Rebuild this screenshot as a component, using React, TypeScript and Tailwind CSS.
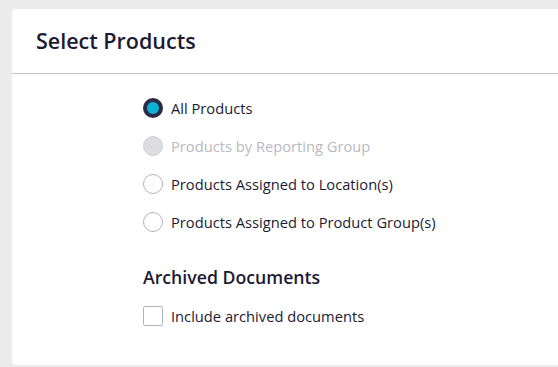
import React from "react";

function Radio({ state }: { state: "checked" | "disabled" | "off" }) {
  if (state === "checked")
    return (
      <span className="w-5 h-5 rounded-full bg-[#2a2947] flex items-center justify-center shrink-0">
        <span className="w-3 h-3 rounded-full bg-[#0cb1d6]" />
      </span>
    );
  if (state === "disabled")
    return <span className="w-5 h-5 rounded-full bg-[#dcdce1] border border-[#cfcfd6] shrink-0" />;
  return <span className="w-5 h-5 rounded-full bg-white border border-[#b3b3bf] shrink-0" />;
}

export default function App() {
  const rows: { label: string; state: "checked" | "disabled" | "off" }[] = [
    { label: "All Products", state: "checked" },
    { label: "Products by Reporting Group", state: "disabled" },
    { label: "Products Assigned to Location(s)", state: "off" },
    { label: "Products Assigned to Product Group(s)", state: "off" },
  ];
  return (
    <div
      className="w-[558px] h-[367px] bg-[#ececec] pl-[12px] pt-[9px] overflow-hidden"
      style={{ fontFamily: '"Open Sans", "Noto Sans", sans-serif' }}
    >
      <div className="bg-white rounded-l-[4px] h-[356px] w-[560px]">
        <div className="h-[65px] border-b border-[#c4c4cc] flex items-center pl-[24px]">
          <h1 className="text-[21.5px] font-semibold text-[#1c1b33]">Select Products</h1>
        </div>
        <div className="pl-[131px] pt-[24px]">
          <div className="flex flex-col gap-[18px]">
            {rows.map((r) => (
              <div key={r.label} className="flex items-center gap-[8px] h-[20px]">
                <Radio state={r.state} />
                <span
                  className={`text-[14.7px] ${r.state === "disabled" ? "text-[#b9b9c2]" : "text-[#1c1b33]"}`}
                >
                  {r.label}
                </span>
              </div>
            ))}
          </div>
          <h2 className="mt-[33px] text-[17.7px] font-semibold text-[#1c1b33] leading-[24px]">Archived Documents</h2>
          <div className="mt-[17px] flex items-center gap-[8px] h-[20px]">
            <span className="w-5 h-5 rounded-[2px] border border-[#b3b3bf] bg-white shrink-0" />
            <span className="text-[14.7px] text-[#1c1b33]">Include archived documents</span>
          </div>
        </div>
      </div>
    </div>
  );
}
